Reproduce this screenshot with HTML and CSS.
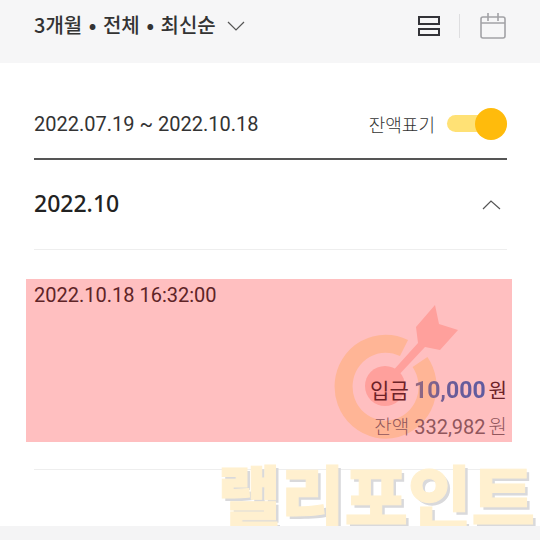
FILE: index.html
```
<!DOCTYPE html>
<html lang="ko">

<head>
    <meta charset="UTF-8">
    <meta name="viewport" content="width=device-width, initial-scale=1.0">
    <title>거래내역</title>
    <link rel="stylesheet" href="styles.css">
</head>

<body>
    <header class="topbar">
        <button class="filter-btn" type="button">
            <span class="filters">3개월 <b class="dot">•</b> 전체 <b class="dot">•</b> 최신순</span>
            <svg width="18" height="10" viewBox="0 0 18 10" fill="none" stroke="#555" stroke-width="1.2">
                <path d="M1 1l8 8 8-8" />
            </svg>
        </button>
        <div class="tools">
            <button class="icon-btn" type="button" aria-label="목록 보기">
                <svg width="22" height="22" viewBox="0 0 22 22" fill="none" stroke="#333338" stroke-width="2">
                    <path d="M1 2h20v7H1zM1 14h20v6H1z" />
                </svg>
            </button>
            <span class="divider"></span>
            <button class="icon-btn" type="button" aria-label="달력 보기">
                <svg width="28" height="28" viewBox="0 0 28 28" fill="none" stroke="#a2a2a6" stroke-width="1.6">
                    <rect x="2" y="5" width="24" height="21" rx="2" />
                    <path d="M2 11h24M9 1v8M19 1v8" />
                </svg>
            </button>
        </div>
    </header>
    <main>
        <div class="period">
            <p class="date">2022.07.19 ~ 2022.10.18</p>
            <label class="balance-toggle" for="balanceInput">
                잔액표기
                <input type="checkbox" id="balanceInput" checked>
            </label>
        </div>
        <div class="month">
            <h2 class="heading">2022.10</h2>
            <button class="icon-btn" type="button" aria-label="접기">
                <svg width="19" height="11" viewBox="0 0 19 11" fill="none" stroke="#555" stroke-width="1.2">
                    <path d="M1 10l8-8 9 8" />
                </svg>
            </button>
        </div>
        <article class="entry">
            <div class="card">
                <svg class="target" width="130" height="136" viewBox="332 303 130 136">
                    <path d="M404 348A42 43 0 1 0 420 362" fill="none" stroke="#ffb596" stroke-width="18" />
                    <circle cx="385" cy="386" r="20" fill="#ffa09c" />
                    <path d="M390 374L418 343 416 327 435 305 439 324 458 330 440 350 425 347 395 379z" fill="#ffa09c" />
                </svg>
                <p class="date">2022.10.18 16:32:00</p>
                <div class="amounts">
                    <p class="deposit">입금 <strong>10,000</strong><span class="won">원</span></p>
                    <p class="balance"><span class="name">잔액</span> 332,982<span class="won">원</span></p>
                </div>
            </div>
            <span class="watermark">랠리포인트</span>
        </article>
    </main>
</body>

</html>
```
FILE: styles.css
```
* {
    margin: 0;
    padding: 0;
    box-sizing: border-box;
}

body {
    font-family: Roboto, 'Noto Sans CJK KR', sans-serif;
    background-color: #f4f4f5;
    color: #333;
}

button {
    border: none;
    background: none;
    color: inherit;
    font-family: inherit;
    cursor: pointer;
}

svg {
    display: block;
}

.topbar {
    display: flex;
    justify-content: space-between;
    align-items: center;
    height: 63px;
    padding: 0 33px 12px 34px;
    background-color: #f6f6f7;
}

.filter-btn {
    display: flex;
    align-items: center;
    gap: 11px;
    font-size: 20px;
    font-weight: 500;
    line-height: 28px;
    white-space: nowrap;
}

.filters {
    padding-bottom: 2px;
    font-family: 'Noto Sans CJK KR', sans-serif;
}

.dot {
    margin: 0 1px;
}

.tools {
    display: flex;
    align-items: center;
    gap: 19px;
}

.divider {
    width: 1px;
    height: 24px;
    background-color: #dedee0;
}

main {
    padding: 26px 33px 0 34px;
    background-color: #fff;
}

.period,
.month {
    display: flex;
    justify-content: space-between;
    align-items: center;
}

.period {
    height: 71px;
    border-bottom: 2px solid #555;
}

.date {
    font-size: 20px;
    line-height: 30px;
}

.balance-toggle {
    display: flex;
    align-items: center;
    gap: 12px;
    font-size: 18px;
    font-weight: 300;
}

.balance-toggle input {
    appearance: none;
    display: flex;
    align-items: center;
    width: 60px;
    height: 17px;
    border-radius: 9px;
    background-color: #ffe175;
}

.balance-toggle input::before {
    content: '';
    width: 32px;
    height: 32px;
    border-radius: 50%;
    background-color: #ffbb0c;
}

.balance-toggle input:checked::before {
    margin-left: auto;
}

.month {
    height: 90px;
    border-bottom: 1px solid #eee;
}

.month .icon-btn {
    padding-right: 6px;
}

.heading {
    padding-bottom: 4px;
    font-family: 'Noto Sans', sans-serif;
    font-size: 23px;
    font-weight: 500;
    color: #222;
}

.entry {
    position: relative;
    padding: 29px 0 84px;
}

.card {
    display: flex;
    flex-direction: column;
    justify-content: space-between;
    position: relative;
    min-height: 163px;
    margin: 0 -5px 0 -8px;
    padding: 1px 5px 0 8px;
    background-color: #ffbfc0;
}

.card .date {
    color: #5e2427;
}

/* line under the entry */
.card::after {
    content: '';
    position: absolute;
    left: 8px;
    right: 5px;
    bottom: -28px;
    height: 1px;
    background-color: #eee;
}

.target {
    position: absolute;
    right: 50px;
    bottom: 3px;
}

.amounts {
    position: relative;
    margin-bottom: -4px;
    text-align: right;
    line-height: 36px;
}

.deposit {
    font-size: 21px;
    color: #6d2228;
}

.deposit strong {
    font-size: 23px;
    font-weight: 700;
    background: linear-gradient(90deg, #96697f, #6b5c98 50%, #5f5ba0);
    background-clip: text;
    color: transparent;
}

.balance {
    font-size: 20px;
    color: #91565c;
}

.name {
    font-size: 19px;
    font-weight: 300;
}

.won {
    margin-left: 3px;
    font-size: 20px;
}

.balance .won {
    font-weight: 300;
}

.watermark {
    position: absolute;
    right: -28px;
    bottom: -8px;
    font-family: 'Noto Sans CJK KR', sans-serif;
    font-size: 69px;
    font-weight: 900;
    line-height: 80px;
    white-space: nowrap;
    color: #fff0cf;
    -webkit-text-stroke: 1px #fff0cf;
    text-shadow: 3px 3px 0 #d9d9db;
}
```
